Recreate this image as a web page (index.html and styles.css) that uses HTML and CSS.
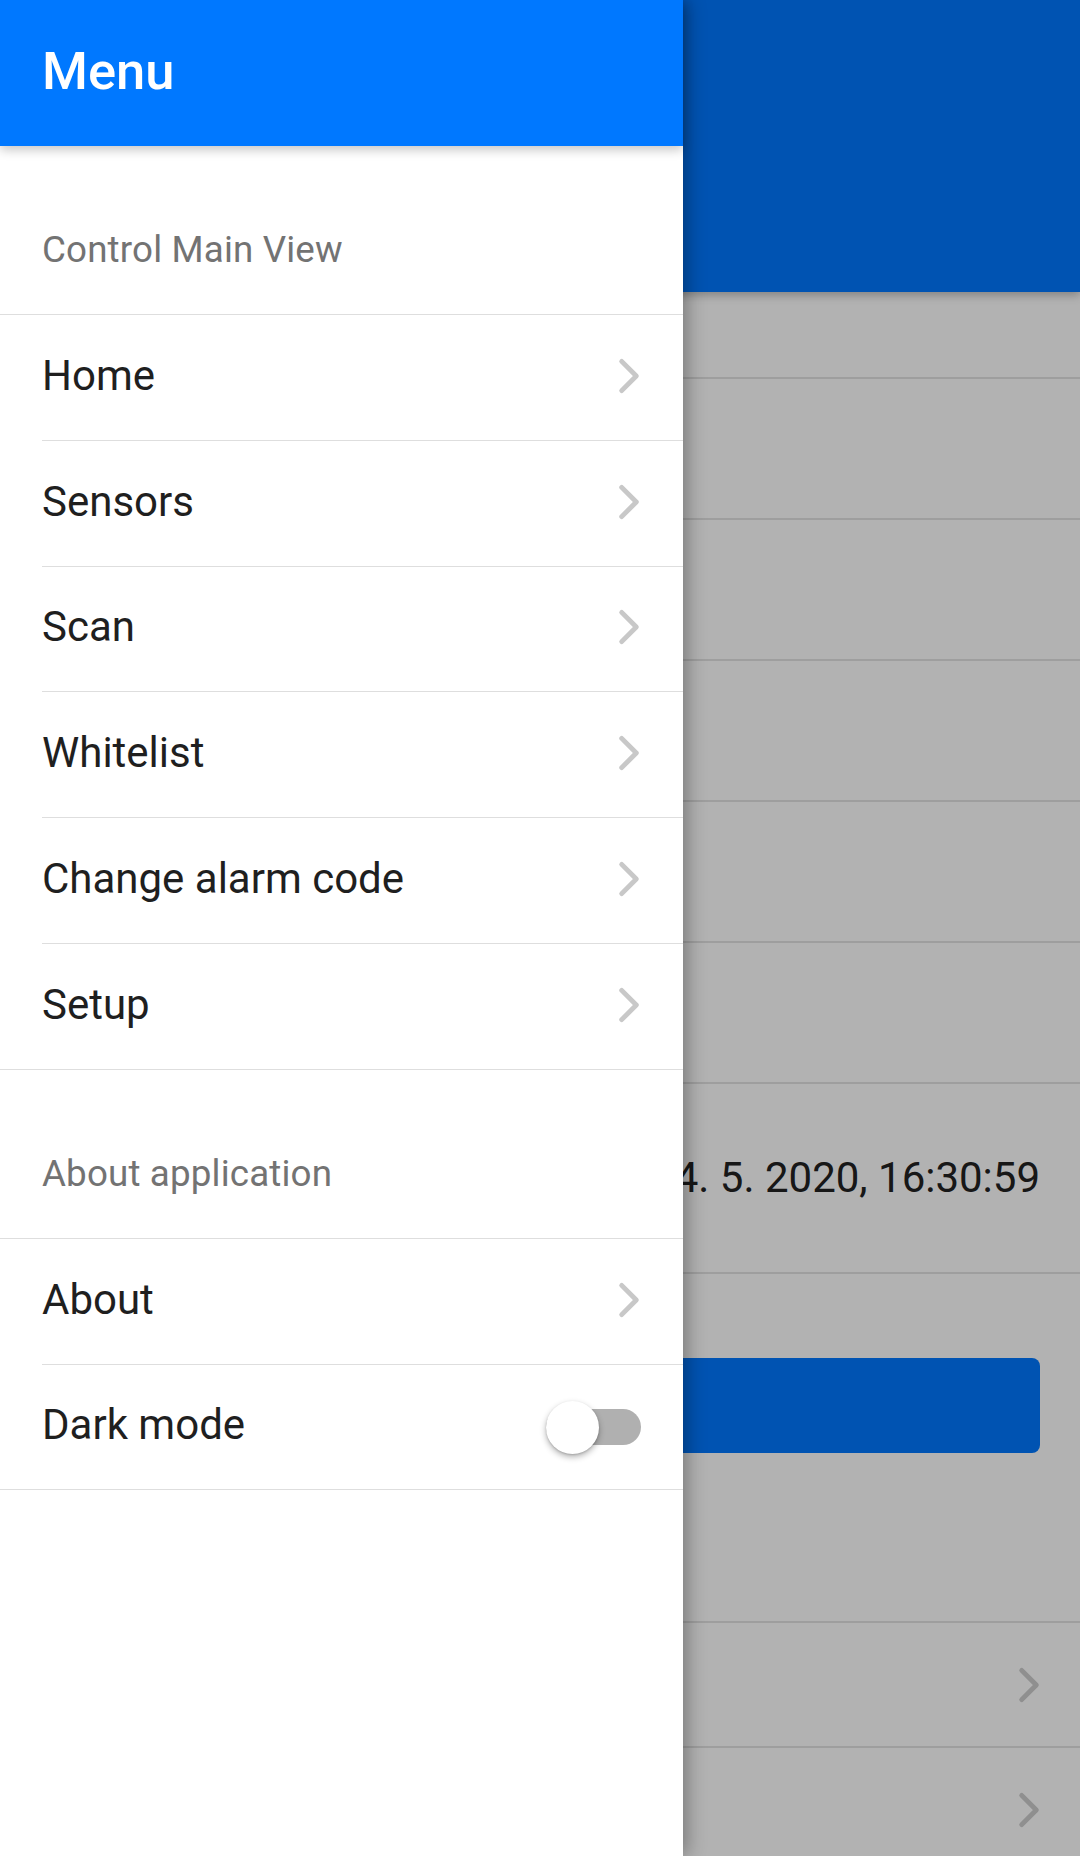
FILE: index.html
```html
<!DOCTYPE html>
<html lang="en">
<head>
<meta charset="utf-8">
<title>Menu</title>
<link rel="stylesheet" href="styles.css">
</head>
<body>
<div class="app">
  <div class="page">
    <header class="page-head"></header>
    <div class="page-body">
      <div class="row row-sm"></div>
      <div class="row"></div>
      <div class="row"></div>
      <div class="row"></div>
      <div class="row"></div>
      <div class="row"></div>
      <div class="row row-date"><span class="date">4. 5. 2020, 16:30:59</span></div>
      <div class="row row-btn"><div class="btn"></div></div>
      <div class="row row-nav">
        <svg class="chev chev-page" viewBox="0 0 512 512"><path d="M184 112l144 144-144 144"/></svg>
      </div>
      <div class="row row-nav">
        <svg class="chev chev-page" viewBox="0 0 512 512"><path d="M184 112l144 144-144 144"/></svg>
      </div>
    </div>
  </div>

  <div class="backdrop"></div>

  <aside class="drawer">
    <header class="drawer-head"><h1 class="drawer-title">Menu</h1></header>
    <div class="drawer-body">
      <section class="group">
        <div class="group-title">Control Main View</div>
        <ul class="menu">
          <li class="menu-item"><div class="menu-inner"><span class="label">Home</span><svg class="chev" viewBox="0 0 512 512"><path d="M184 112l144 144-144 144"/></svg></div></li>
          <li class="menu-item"><div class="menu-inner"><span class="label">Sensors</span><svg class="chev" viewBox="0 0 512 512"><path d="M184 112l144 144-144 144"/></svg></div></li>
          <li class="menu-item"><div class="menu-inner"><span class="label">Scan</span><svg class="chev" viewBox="0 0 512 512"><path d="M184 112l144 144-144 144"/></svg></div></li>
          <li class="menu-item"><div class="menu-inner"><span class="label">Whitelist</span><svg class="chev" viewBox="0 0 512 512"><path d="M184 112l144 144-144 144"/></svg></div></li>
          <li class="menu-item"><div class="menu-inner"><span class="label">Change alarm code</span><svg class="chev" viewBox="0 0 512 512"><path d="M184 112l144 144-144 144"/></svg></div></li>
          <li class="menu-item menu-item-last"><div class="menu-inner"><span class="label">Setup</span><svg class="chev" viewBox="0 0 512 512"><path d="M184 112l144 144-144 144"/></svg></div></li>
        </ul>
      </section>
      <section class="group">
        <div class="group-title">About application</div>
        <ul class="menu">
          <li class="menu-item"><div class="menu-inner"><span class="label">About</span><svg class="chev" viewBox="0 0 512 512"><path d="M184 112l144 144-144 144"/></svg></div></li>
          <li class="menu-item menu-item-last"><div class="menu-inner"><span class="label">Dark mode</span><span class="toggle"><span class="toggle-knob"></span></span></div></li>
        </ul>
      </section>
    </div>
  </aside>
</div>
</body>
</html>
```
FILE: styles.css
```css
* { box-sizing: border-box; }
html, body {
  margin: 0;
  padding: 0;
  width: 1080px;
  height: 1856px;
  overflow: hidden;
  font-family: Roboto, "Noto Sans", "Liberation Sans", sans-serif;
  background: #ffffff;
}
.app {
  position: relative;
  width: 1080px;
  height: 1856px;
  overflow: hidden;
}

/* underlying page */
.page {
  position: relative;
  z-index: 0;
  display: flex;
  flex-direction: column;
  height: 100%;
  background: #ffffff;
}
.page-head {
  height: 292px;
  flex: none;
  background: #0078ff;
  box-shadow: 0 3px 9px rgba(0, 0, 0, 0.28);
  position: relative;
  z-index: 1;
}
.page-body {
  display: flex;
  flex-direction: column;
}
.row {
  height: 141px;
  flex: none;
  border-bottom: 2px solid #e2e2e2;
  display: flex;
  align-items: center;
  justify-content: flex-end;
  padding-right: 40px;
}
.row-sm { height: 87px; }
.row-date { height: 190px; }
.row-btn {
  height: 349px;
  align-items: flex-start;
  padding: 84px 40px 0 40px;
}
.row-nav { height: 125px; padding-right: 25px; }
.date {
  font-size: 42px;
  color: #212121;
  white-space: nowrap;
  line-height: 50px;
}
.btn {
  width: 100%;
  height: 95px;
  background: #0078ff;
  border-radius: 8px;
}
.chev {
  width: 52px;
  height: 52px;
  flex: none;
  fill: none;
  stroke: #c8c8c8;
  stroke-width: 48;
  stroke-linecap: round;
  stroke-linejoin: round;
}
.chev-page { stroke: #cdcdcd; }

.backdrop {
  position: absolute;
  inset: 0;
  z-index: 1;
  background: rgba(0, 0, 0, 0.3);
}

/* drawer */
.drawer {
  position: absolute;
  top: 0;
  left: 0;
  bottom: 0;
  z-index: 2;
  width: 683px;
  background: #ffffff;
  box-shadow: 4px 0 18px rgba(0, 0, 0, 0.32);
  display: flex;
  flex-direction: column;
}
.drawer-head {
  height: 146px;
  flex: none;
  background: #0078ff;
  display: flex;
  align-items: center;
  padding: 0 42px 4px 42px;
  box-shadow: 0 4px 10px rgba(0, 0, 0, 0.22);
  position: relative;
  z-index: 1;
}
.drawer-title {
  margin: 0;
  font-size: 52.5px;
  font-weight: 500;
  color: #ffffff;
  line-height: 62px;
}
.drawer-body {
  flex: 1;
}
.group-title {
  height: 169px;
  padding: 82px 42px 0 42px;
  font-size: 36.75px;
  line-height: 44px;
  letter-spacing: 0.15px;
  color: #737373;
  border-bottom: 1px solid #dedede;
}
.menu {
  list-style: none;
  margin: 0;
  padding: 0;
}
.menu-item {
  padding-left: 42px;
}
.menu-inner {
  height: 125.8px;
  display: flex;
  align-items: center;
  justify-content: space-between;
  padding: 0 42px 3px 0;
  border-bottom: 1px solid #dedede;
}
.menu-item-last {
  border-bottom: 1px solid #dedede;
}
.menu-item-last .menu-inner {
  border-bottom: none;
  height: 124.8px;
}
.label {
  font-size: 42px;
  line-height: 50px;
  color: #1f1f1f;
}
.menu-inner .chev {
  margin-right: -14px;
}
.toggle {
  position: relative;
  width: 95px;
  height: 36px;
  border-radius: 18px;
  background: #b0b0b0;
  flex: none;
  margin-top: 3px;
}
.toggle-knob {
  position: absolute;
  left: 0;
  top: -8px;
  width: 53px;
  height: 53px;
  border-radius: 50%;
  background: #ffffff;
  box-shadow: 0 3px 6px rgba(0, 0, 0, 0.3), 0 1px 2px rgba(0, 0, 0, 0.15);
}
```
